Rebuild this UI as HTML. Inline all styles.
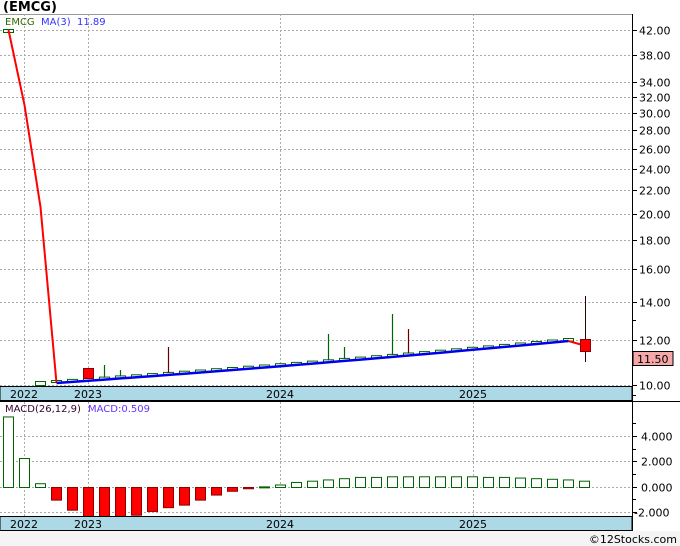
<!DOCTYPE html>
<html><head><meta charset="utf-8"><style>
body{margin:0;width:680px;height:546px;background:#f4f4f4;overflow:hidden;font-family:"Liberation Sans","DejaVu Sans",sans-serif}
svg{position:absolute;left:0;top:0}
</style></head><body>
<svg id="s" width="680" height="546" xmlns="http://www.w3.org/2000/svg" font-family="DejaVu Sans, Liberation Sans, sans-serif">
<rect x="0" y="0" width="680" height="531" fill="#fff"/>
<rect x="0" y="531" width="680" height="15" fill="#f4f4f4"/>
<text x="3" y="11" font-size="13" font-weight="bold" fill="#000">(EMCG)</text>
<line x1="0" y1="14.5" x2="632" y2="14.5" stroke="#999"/>
<g id="g"></g>
<rect x="0" y="386.5" width="632" height="14" fill="#add8e6" stroke="#000"/>
<rect x="0" y="516.5" width="632" height="14" fill="#add8e6" stroke="#000"/>
<line x1="0" y1="401.5" x2="680" y2="401.5" stroke="#000"/>
<line x1="632.5" y1="14" x2="632.5" y2="531" stroke="#000"/>
<line x1="0" y1="530.5" x2="632" y2="530.5" stroke="#000"/>
<g font-size="11" fill="#000">
<text x="10" y="398">2022</text><text x="74" y="398">2023</text><text x="266" y="398">2024</text><text x="459" y="398">2025</text>
<text x="10" y="528">2022</text><text x="74" y="528">2023</text><text x="266" y="528">2024</text><text x="459" y="528">2025</text>
</g>
<text x="5" y="25" font-size="10" fill="#336600">EMCG</text>
<text x="41" y="25" font-size="10" fill="#3333ff">MA(3)</text>
<text x="77" y="25" font-size="10" fill="#3333ff">11.89</text>
<text x="5" y="412" font-size="10" fill="#330033">MACD(26,12,9)</text>
<text x="88" y="412" font-size="10" fill="#6633ff">MACD:0.509</text>
<text x="677" y="543" font-size="11" fill="#000" text-anchor="end">©12Stocks.com</text>
</svg>
<script>
var g=document.getElementById('g'),h='';
function Y(p){return 30+247.6*Math.log(42/p);}
var pl=[42,38,34,32,30,28,26,24,22,20,18,16,14,12,10];
pl.forEach(function(p){var y=Math.round(Y(p))+.5;
h+='<line x1="0" y1="'+y+'" x2="632" y2="'+y+'" stroke="#aaa" stroke-dasharray="2,2"/>';
h+='<line x1="632" y1="'+y+'" x2="637" y2="'+y+'" stroke="#000"/>';
h+='<text x="639" y="'+(y+4)+'" font-size="11">'+p.toFixed(2)+'</text>';});
[13,11,9.6].forEach(function(p){var y=Math.round(Y(p))+.5;h+='<line x1="632" y1="'+y+'" x2="636" y2="'+y+'" stroke="#000"/>';});
h+='<rect x="633" y="351.5" width="40" height="14" fill="#f4a8a8" stroke="#000"/><text x="637" y="363" font-size="11">11.50</text>';
[[4,436],[2,461],[0,487],[-2,512]].forEach(function(a){var y=a[1]+.5;
h+='<line x1="0" y1="'+y+'" x2="632" y2="'+y+'" stroke="#aaa" stroke-dasharray="2,2"/>';
h+='<line x1="632" y1="'+y+'" x2="637" y2="'+y+'" stroke="#000"/>';
h+='<text x="'+(a[0]<0?634:641)+'" y="'+(y+4)+'" font-size="11">'+a[0].toFixed(3)+'</text>';});
[423,449,474,499].forEach(function(y){h+='<line x1="632" y1="'+(y+.5)+'" x2="636" y2="'+(y+.5)+'" stroke="#000"/>';});
[24,88,280,473].forEach(function(x){h+='<line x1="'+(x+.5)+'" y1="14" x2="'+(x+.5)+'" y2="531" stroke="#aaa" stroke-dasharray="2,2"/>';});
var mv=[5.6,2.3,0.3,-1.0,-1.8,-2.3,-2.3,-2.3,-2.2,-1.9,-1.6,-1.4,-1.0,-0.6,-0.3,-0.1,0.05,0.2,0.4,0.5,0.6,0.7,0.8,0.8,0.85,0.85,0.85,0.85,0.85,0.85,0.8,0.8,0.75,0.7,0.65,0.6,0.5];
mv.forEach(function(v,i){var x=3+16*i,y0=487,y1=487-v*12.6,t=Math.min(y0,y1),hh=Math.max(1,Math.abs(y1-y0));
if(v>=0)h+='<rect x="'+(x+.5)+'" y="'+(t+.5)+'" width="10" height="'+hh+'" fill="#fff" stroke="#006400"/>';
else h+='<rect x="'+(x+.5)+'" y="'+(t+.5)+'" width="10" height="'+hh+'" fill="#f00" stroke="#8b0000"/>';});
function mlp(i){return 8.5+16*i;}
var my=[30,105,207,383];
for(var i=4;i<36;i++){var t=(i-3)/32;my.push(383-42*(t*0.85+0.15*t*t));}
my.push(345);
var red='',blue='';
for(i=0;i<4;i++)red+=(i?' L':'M')+mlp(i)+','+my[i];
for(i=3;i<36;i++)blue+=(i>3?' L':'M')+mlp(i)+','+my[i].toFixed(1);
for(i=4;i<36;i++){var x=mlp(i),y=my[i]-1;
h+='<rect x="'+(x-5)+'" y="'+(y-1.5).toFixed(1)+'" width="10" height="2.5" fill="#fff" stroke="#006400"/>';}
[[6,365],[7,370],[10,347],[20,334],[21,347],[24,314],[25,329]].forEach(function(a){var x=mlp(a[0]);h+='<line x1="'+x+'" y1="'+a[1]+'" x2="'+x+'" y2="'+(my[a[0]]-2)+'" stroke="'+(a[0]==10||a[0]==25?'#600':'#006400')+'" stroke-width="1.2"/>';});
h+='<rect x="3.5" y="29.5" width="10" height="3" fill="#fff" stroke="#006400"/>';
h+='<rect x="35.5" y="381.5" width="10" height="4" fill="#fff" stroke="#006400"/>';
h+='<rect x="51.5" y="380.5" width="10" height="2" fill="#fff" stroke="#006400"/>';
h+='<path d="'+red+'" stroke="#f00" stroke-width="2" fill="none"/>';
h+='<path d="'+blue+'" stroke="#0000ee" stroke-width="2.5" fill="none"/>';
h+='<path d="M'+mlp(35)+','+my[35]+' L'+(mlp(35)+14)+','+my[36]+'" stroke="#f00" stroke-width="2" fill="none"/>';
h+='<rect x="83.5" y="368.5" width="10" height="10" fill="#f00" stroke="#8b0000"/>';
h+='<line x1="585.5" y1="296" x2="585.5" y2="362" stroke="#300"/>';
h+='<rect x="580.5" y="339.5" width="10" height="12" fill="#f00" stroke="#8b0000"/>';
g.innerHTML=h;
</script>
</body></html>
